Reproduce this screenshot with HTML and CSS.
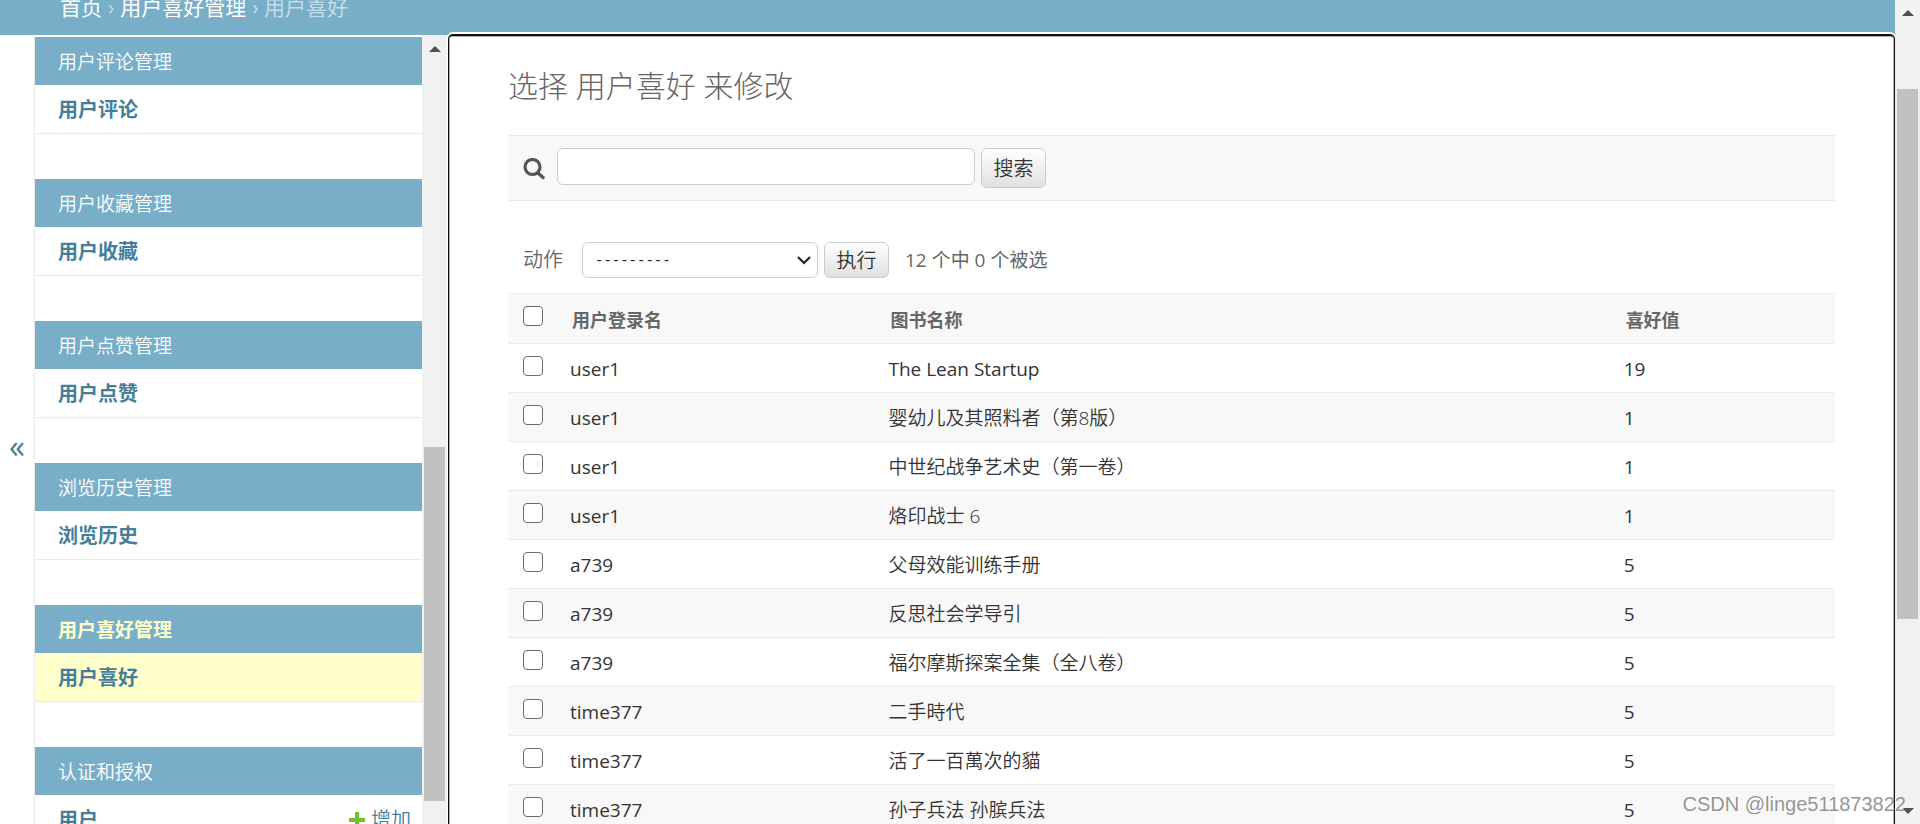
FILE: index.html
```
<!DOCTYPE html>
<html lang="zh-Hans">
<head>
<meta charset="utf-8">
<title>选择 用户喜好 来修改</title>
<link rel="stylesheet" href="styles.css">
</head>
<body>
<div class="page">
  <nav class="breadcrumbs"><a href="#">首页</a> › <a href="#">用户喜好管理</a> › 用户喜好</nav>
  <div class="columns">
    <button class="toggle" type="button" aria-label="切换导航">«</button>
    <nav class="sidebar">
      <section class="app"><h2 class="caption"><a href="#">用户评论管理</a></h2><div class="model"><a class="model-name" href="#">用户评论</a></div></section>
      <section class="app"><h2 class="caption"><a href="#">用户收藏管理</a></h2><div class="model"><a class="model-name" href="#">用户收藏</a></div></section>
      <section class="app"><h2 class="caption"><a href="#">用户点赞管理</a></h2><div class="model"><a class="model-name" href="#">用户点赞</a></div></section>
      <section class="app"><h2 class="caption"><a href="#">浏览历史管理</a></h2><div class="model"><a class="model-name" href="#">浏览历史</a></div></section>
      <section class="app current"><h2 class="caption"><a href="#">用户喜好管理</a></h2><div class="model"><a class="model-name" href="#">用户喜好</a></div></section>
      <section class="app"><h2 class="caption"><a href="#">认证和授权</a></h2><div class="model"><a class="model-name" href="#">用户</a><a class="add" href="#"><svg width="16" height="16" viewBox="0 0 16 16" aria-hidden="true"><path d="M6 0h4v6h6v4h-6v6H6v-6H0V6h6z" fill="#70bf2b"/></svg>增加</a></div></section>
    </nav>
    <div class="scrollbar side-scroll" aria-hidden="true">
      <svg class="arrow" width="12" height="6" viewBox="0 0 12 6"><path d="M0 6L6 0l6 6z" fill="#505050"/></svg>
      <div class="thumb"></div>
    </div>
    <main class="content">
      <h1 class="title">选择 用户喜好 来修改</h1>
      <form class="search">
        <label class="search-label" for="q"><svg width="22" height="22" viewBox="0 0 22 22" role="img" aria-label="搜索"><circle cx="9.500" cy="9" r="7.500" fill="none" stroke="#555" stroke-width="3.200"/><path d="M15 15l5 4.500" stroke="#555" stroke-width="3.500" stroke-linecap="round"/></svg></label>
        <input class="search-input" id="q" type="text">
        <button class="button search-button" type="button">搜索</button>
      </form>
      <div class="actions">
        <label class="action-label" for="action">动作</label>
        <div class="select-wrap">
          <select class="select" id="action"><option>---------</option></select>
          <svg class="chevron" width="16" height="10" viewBox="0 0 16 10" aria-hidden="true"><path d="M2 2l6 6 6-6" fill="none" stroke="#222" stroke-width="2.200"/></svg>
        </div>
        <button class="button" type="button">执行</button>
        <span class="counter">12 个中 0 个被选</span>
      </div>
      <table class="results">
        <colgroup><col class="col-check"><col class="col-user"><col class="col-book"><col class="col-score"></colgroup>
        <thead><tr><th><input class="check" type="checkbox" aria-label="全选"></th><th>用户登录名</th><th>图书名称</th><th>喜好值</th></tr></thead>
        <tbody>
          <tr><td><input class="check" type="checkbox" aria-label="选择"></td><td>user1</td><td>The Lean Startup</td><td>19</td></tr>
          <tr><td><input class="check" type="checkbox" aria-label="选择"></td><td>user1</td><td class="book">婴幼儿及其照料者（第8版）</td><td>1</td></tr>
          <tr><td><input class="check" type="checkbox" aria-label="选择"></td><td>user1</td><td class="book">中世纪战争艺术史（第一卷）</td><td>1</td></tr>
          <tr><td><input class="check" type="checkbox" aria-label="选择"></td><td>user1</td><td class="book">烙印战士 6</td><td>1</td></tr>
          <tr><td><input class="check" type="checkbox" aria-label="选择"></td><td>a739</td><td class="book">父母效能训练手册</td><td>5</td></tr>
          <tr><td><input class="check" type="checkbox" aria-label="选择"></td><td>a739</td><td class="book">反思社会学导引</td><td>5</td></tr>
          <tr><td><input class="check" type="checkbox" aria-label="选择"></td><td>a739</td><td class="book">福尔摩斯探案全集（全八卷）</td><td>5</td></tr>
          <tr><td><input class="check" type="checkbox" aria-label="选择"></td><td>time377</td><td class="book">二手時代</td><td>5</td></tr>
          <tr><td><input class="check" type="checkbox" aria-label="选择"></td><td>time377</td><td class="book">活了一百萬次的貓</td><td>5</td></tr>
          <tr><td><input class="check" type="checkbox" aria-label="选择"></td><td>time377</td><td class="book">孙子兵法 孙膑兵法</td><td>5</td></tr>
        </tbody>
      </table>
    </main>
  </div>
</div>
<div class="scrollbar page-scroll" aria-hidden="true">
  <svg class="arrow" width="12" height="6" viewBox="0 0 12 6"><path d="M0 6L6 0l6 6z" fill="#505050"/></svg>
  <div class="thumb"></div>
  <svg class="arrow arrow-down" width="12" height="6" viewBox="0 0 12 6"><path d="M0 0l6 6 6-6z" fill="#505050"/></svg>
</div>
<div class="watermark">CSDN @linge511873822</div>
</body>
</html>
```
FILE: styles.css
```
* {
  box-sizing: border-box;
}

body {
  margin: 0;
  height: 100vh;
  display: flex;
  overflow: hidden;
  background: #fff;
  color: #333;
  font: 19px/24px "Open Sans", "Noto Sans CJK SC", sans-serif;
}

a {
  text-decoration: none;
}

.page {
  flex: 1;
  min-width: 0;
  display: flex;
  flex-direction: column;
}

.breadcrumbs {
  flex: none;
  height: 35px;
  padding: 0 60px 14px;
  display: flex;
  align-items: flex-end;
  gap: 6px;
  overflow: hidden;
  background: #79aec8;
  color: #c4dce8;
  font-size: 21px;
  line-height: 28px;
}

.breadcrumbs a {
  color: #fff;
}

.columns {
  flex: 1;
  min-height: 0;
  display: flex;
}

.toggle {
  flex: none;
  width: 35px;
  padding: 32px 0 0;
  border: 0;
  border-right: 1px solid #eaeaea;
  background: #fff;
  color: #447e9b;
  font: 32px/32px "Open Sans", sans-serif;
}

.sidebar {
  flex: none;
  width: 387px;
  padding-top: 2px;
  overflow: hidden;
}

.app {
  margin-bottom: 45px;
}

.caption {
  margin: 0;
  padding: 13px 23px 11px;
  background: #79aec8;
  font-size: 19px;
  line-height: 24px;
  font-weight: 350;
}

.caption a {
  color: #fff;
}

.model {
  display: flex;
  justify-content: space-between;
  padding: 13px 11px 11px 23px;
  border-bottom: 1px solid #eaeaea;
}

.model a {
  color: #447e9b;
}

.model-name {
  font-size: 20px;
  font-weight: 700;
}

.add {
  display: flex;
  align-items: center;
  gap: 6px;
  font-size: 20px;
  font-weight: 350;
}

.current .caption {
  font-weight: 700;
}

.current .caption a {
  color: #ffc;
}

.current .model {
  background: #ffc;
}

.scrollbar {
  flex: none;
  width: 25px;
  display: flex;
  flex-direction: column;
  align-items: center;
  background: #f1f1f1;
}

.thumb {
  width: 21px;
  background: #c1c1c1;
}

.arrow {
  flex: none;
  margin-top: 10px;
}

.side-scroll {
  margin-right: 1px;
  padding-top: 1px;
}

.side-scroll .thumb {
  margin-top: 395px;
  flex: 0 0 354px;
}

.page-scroll .thumb {
  margin-top: 73px;
  flex: 0 0 530px;
}

.arrow-down {
  margin: auto 0 10px;
}

.content {
  flex: 1;
  min-width: 0;
  margin: -1px 0 -2px;
  padding: 30px 59px 0;
  overflow: hidden;
  border: solid #101010;
  border-width: 2px 1px 0;
  border-radius: 5px 5px 0 0;
  box-shadow: 0 -2px 0 #fff, inset 0 0 0 1px #b0b0b0;
  background: #fff;
}

.title {
  margin: 0 0 29px;
  color: #666;
  font-size: 30px;
  line-height: 40px;
  font-weight: 300;
}

.search {
  display: flex;
  align-items: flex-start;
  padding: 12px 15px;
  border: solid #eaeaea;
  border-width: 1px 0;
  background: #f8f8f8;
}

.search-label {
  width: 34px;
  padding-top: 10px;
  line-height: 0;
}

.search-input {
  width: 418px;
  height: 37px;
  margin-right: 6px;
  padding: 0 8px;
  border: 1px solid #ccc;
  border-radius: 6px;
  background: #fff;
  color: #333;
  font: inherit;
}

.button {
  width: 65px;
  height: 36px;
  padding: 2px 0 0;
  border: 1px solid #ccc;
  border-radius: 6px;
  background: linear-gradient(#fff, #e0e0e0);
  color: #333;
  font: inherit;
  font-size: 20px;
  font-weight: 350;
}

.search-button {
  height: 40px;
}

.actions {
  display: flex;
  align-items: center;
  padding: 41px 15px 15px;
  color: #666;
  font-size: 20px;
  font-weight: 350;
}

.action-label {
  width: 59px;
}

.select-wrap {
  position: relative;
  width: 236px;
  margin-right: 6px;
}

.select {
  display: block;
  width: 100%;
  height: 36px;
  padding: 2px 12px 0;
  appearance: none;
  border: 1px solid #ccc;
  border-radius: 6px;
  background: #fff;
  color: #222;
  font: 14px/20px "Liberation Mono", monospace;
}

.chevron {
  position: absolute;
  top: 13px;
  right: 6px;
  pointer-events: none;
}

.counter {
  margin-left: 16px;
  font-size: 19px;
  font-weight: 400;
}

.results {
  width: 100%;
  table-layout: fixed;
  border-collapse: collapse;
}

.col-check {
  width: 50px;
}

.col-user {
  width: 24%;
}

.col-book {
  width: 55.400%;
}

.results td {
  height: 49px;
  padding: 13px 12px 11px;
  border-bottom: 1px solid #eaeaea;
  font-size: 19px;
  line-height: 24px;
  vertical-align: top;
}

.results .book {
  font-weight: 350;
}

.results th {
  height: 50px;
  padding: 14px 14px 11px;
  border: solid #eaeaea;
  border-width: 1px 0;
  background: #f8f8f8;
  color: #666;
  font-size: 18px;
  line-height: 24px;
  text-align: left;
  vertical-align: top;
}

.results tbody tr:nth-child(even) {
  background: #f8f8f8;
}

.results td:first-child,
.results th:first-child {
  padding: 12px 15px 0;
  line-height: 0;
}

.check {
  appearance: none;
  width: 20px;
  height: 20px;
  margin: 0;
  border: 1px solid #6b6b6b;
  border-radius: 4px;
  background: #fff;
}

.watermark {
  position: absolute;
  right: 14px;
  bottom: 8px;
  color: rgba(130, 130, 130, 0.85);
  font: 20px/24px "Liberation Sans", Arial, sans-serif;
  text-shadow: -1px -1px 0 rgba(255, 255, 255, 0.8);
  pointer-events: none;
}
```
